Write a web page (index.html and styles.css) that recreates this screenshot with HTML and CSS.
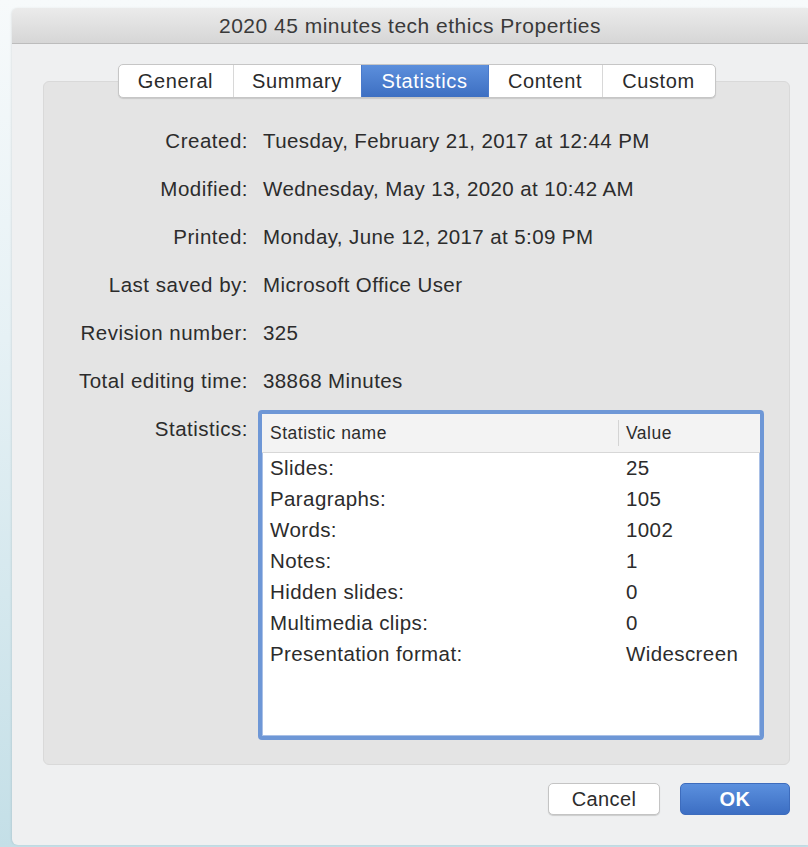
FILE: index.html
```html
<!DOCTYPE html>
<html>
<head>
<meta charset="utf-8">
<title>2020 45 minutes tech ethics Properties</title>
<link rel="stylesheet" href="styles.css">
</head>
<body>
<div class="window">
  <div class="titlebar">2020 45 minutes tech ethics Properties</div>
  <div class="body">
    <div class="tabs">
      <div class="tab t-general">General</div>
      <div class="tab t-summary">Summary</div>
      <div class="tab t-stats active">Statistics</div>
      <div class="tab t-content">Content</div>
      <div class="tab t-custom">Custom</div>
    </div>
    <div class="group">
      <div class="form">
        <div class="label">Created:</div><div class="value">Tuesday, February 21, 2017 at 12:44 PM</div>
        <div class="label">Modified:</div><div class="value">Wednesday, May 13, 2020 at 10:42 AM</div>
        <div class="label">Printed:</div><div class="value">Monday, June 12, 2017 at 5:09 PM</div>
        <div class="label">Last saved by:</div><div class="value">Microsoft Office User</div>
        <div class="label">Revision number:</div><div class="value">325</div>
        <div class="label">Total editing time:</div><div class="value">38868 Minutes</div>
        <div class="label label-top">Statistics:</div>
        <div class="table">
          <div class="thead">
            <div class="th name">Statistic name</div>
            <div class="th val">Value</div>
          </div>
          <div class="row"><span class="name">Slides:</span><span class="val">25</span></div>
          <div class="row"><span class="name">Paragraphs:</span><span class="val">105</span></div>
          <div class="row"><span class="name">Words:</span><span class="val">1002</span></div>
          <div class="row"><span class="name">Notes:</span><span class="val">1</span></div>
          <div class="row"><span class="name">Hidden slides:</span><span class="val">0</span></div>
          <div class="row"><span class="name">Multimedia clips:</span><span class="val">0</span></div>
          <div class="row"><span class="name">Presentation format:</span><span class="val">Widescreen</span></div>
        </div>
      </div>
    </div>
    <div class="buttons">
      <div class="btn cancel">Cancel</div>
      <div class="btn ok">OK</div>
    </div>
  </div>
</div>
</body>
</html>
```
FILE: styles.css
```css
html, body {
  margin: 0;
  height: 100%;
}
body {
  background: linear-gradient(to bottom, #f7fafb 0%, #e6f1f5 40%, #c4dfe7 100%);
  font-family: "Liberation Sans", Arial, sans-serif;
  color: #2c2c2c;
  overflow: hidden;
}
.window {
  margin: 8px 0 0 12px;
  height: 837px;
  background: #eff0f1;
  border-radius: 6px 0 0 6px;
  box-shadow: -1px 0 2px rgba(0,0,0,0.08);
  display: flex;
  flex-direction: column;
}
.titlebar {
  height: 35px;
  line-height: 36px;
  text-align: center;
  font-size: 21px;
  letter-spacing: 0.5px;
  color: #3a3a3a;
  background: linear-gradient(to bottom, #ebebeb, #d6d6d6);
  border-bottom: 1px solid #bcbcbc;
  border-radius: 6px 0 0 0;
}
.body {
  padding: 20px 18px 0 31px;
}
.tabs {
  display: flex;
  width: fit-content;
  margin: 0 auto -17px;
  position: relative;
  z-index: 1;
  background: #fff;
  border: 1px solid #c6c6c6;
  border-radius: 5px;
  box-shadow: 0 1px 1px rgba(0,0,0,0.12);
  overflow: hidden;
}
.tab {
  height: 32px;
  line-height: 32px;
  font-size: 20px;
  letter-spacing: 0.6px;
  text-align: center;
  color: #2a2a2a;
  border-left: 1px solid #d8d8d8;
}
.tab:first-child { border-left: none; }
.t-general { width: 114px; }
.t-summary { width: 127px; }
.t-stats { width: 126px; }
.t-content { width: 113px; }
.t-custom { width: 112px; }
.tab.active {
  background: linear-gradient(to bottom, #5c8fdc, #3d6fc2);
  color: #fff;
  border-left-color: #4a7acb;
}
.tab.active + .tab { border-left-color: #4a7acb; }
.group {
  height: 684px;
  box-sizing: border-box;
  background: #e4e4e4;
  border: 1px solid #d9d9d9;
  border-radius: 6px;
  padding-top: 35px;
}
.form {
  display: grid;
  grid-template-columns: 204px 1fr;
  column-gap: 15px;
  align-items: start;
}
.label {
  text-align: right;
  font-size: 20.5px;
  letter-spacing: 0.5px;
  line-height: 48px;
  color: #2c2c2c;
}
.value {
  font-size: 20.5px;
  letter-spacing: 0.4px;
  line-height: 48px;
}
.label-top {
  line-height: 22px;
  margin-top: 13px;
}
.table {
  margin: 5px 0 0 -5px;
  width: 506px;
  height: 330px;
  box-sizing: border-box;
  border: 4px solid #6e97d6;
  border-radius: 4px;
  background: #fff;
  box-shadow: inset 0 0 0 1px #a9c0e6;
}
.thead {
  display: flex;
  height: 38px;
  background: #f3f3f3;
  border-bottom: 1px solid #d7d7d7;
  align-items: center;
  font-size: 17.5px;
  letter-spacing: 0.5px;
}
.th.name {
  width: 348px;
  padding-left: 8px;
  border-right: 1px solid #d4d4d4;
  line-height: 26px;
}
.th.val {
  padding-left: 7px;
}
.row {
  display: flex;
  height: 31px;
  line-height: 30px;
  font-size: 20.5px;
  letter-spacing: 0.4px;
}
.row .name {
  width: 349px;
  padding-left: 8px;
}
.row .val {
  padding-left: 7px;
}
.buttons {
  display: flex;
  justify-content: flex-end;
  gap: 20px;
  margin-top: 18px;
}
.btn {
  height: 32px;
  box-sizing: border-box;
  text-align: center;
  font-size: 20px;
  letter-spacing: 0.4px;
  border-radius: 5px;
  line-height: 30px;
}
.cancel {
  width: 112px;
  background: #fff;
  border: 1px solid #c4c4c4;
  box-shadow: 0 1px 1px rgba(0,0,0,0.15);
}
.ok {
  width: 110px;
  background: linear-gradient(to bottom, #5b90de, #3c6ec3);
  color: #fff;
  font-weight: bold;
  border: 1px solid #3d6cbd;
}
```
